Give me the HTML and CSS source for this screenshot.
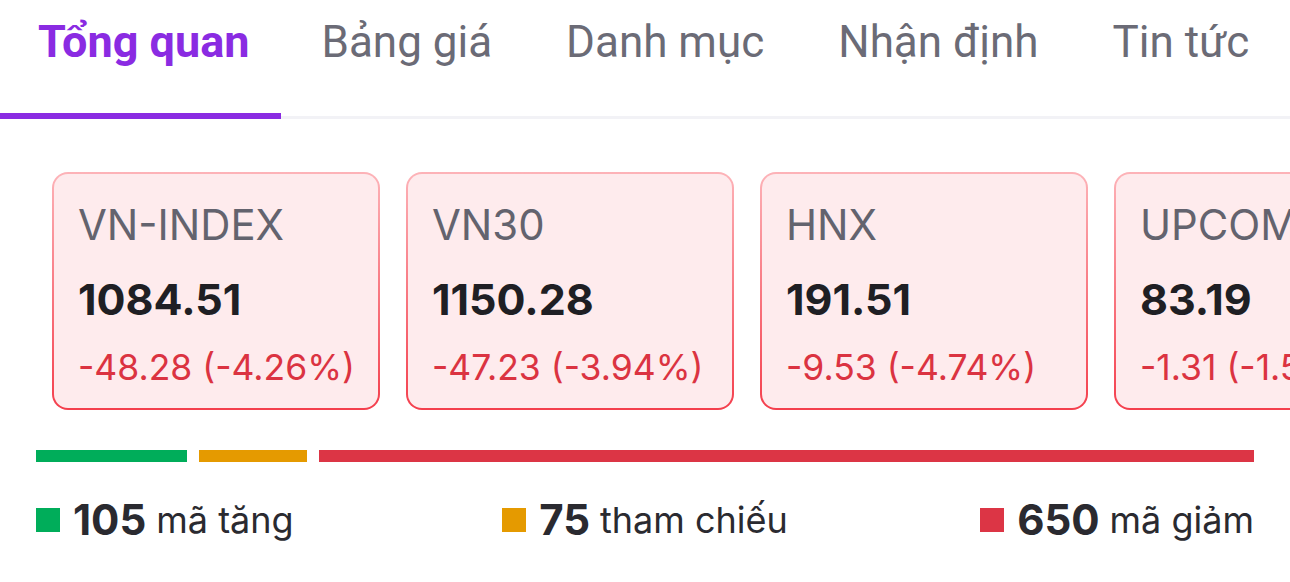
FILE: index.html
```html
<!DOCTYPE html>
<html lang="vi">
<head>
    <meta charset="UTF-8">
    <meta name="viewport" content="width=device-width, initial-scale=1.0">
    <title>Tổng quan thị trường</title>
    <link rel="stylesheet" href="styles.css">
</head>
<body class="body">

    <nav class="tabs">
        <a class="tab active" href="#">Tổng quan</a>
        <a class="tab" href="#">Bảng giá</a>
        <a class="tab" href="#">Danh mục</a>
        <a class="tab" href="#">Nhận định</a>
        <a class="tab" href="#">Tin tức</a>
    </nav>

    <div class="cards">
        <div class="card">
            <div class="card-name">VN-INDEX</div>
            <div class="card-value">1084.51</div>
            <div class="card-change">-48.28 (-4.26%)</div>
        </div>
        <div class="card">
            <div class="card-name">VN30</div>
            <div class="card-value">1150.28</div>
            <div class="card-change">-47.23 (-3.94%)</div>
        </div>
        <div class="card">
            <div class="card-name">HNX</div>
            <div class="card-value">191.51</div>
            <div class="card-change">-9.53 (-4.74%)</div>
        </div>
        <div class="card">
            <div class="card-name">UPCOM</div>
            <div class="card-value">83.19</div>
            <div class="card-change">-1.31 (-1.55%)</div>
        </div>
    </div>

    <div class="breadth">
        <div class="bars">
            <div class="bar up" style="flex-grow: 105"></div>
            <div class="bar ref" style="flex-grow: 75"></div>
            <div class="bar down" style="flex-grow: 650"></div>
        </div>
        <div class="legend">
            <div class="item"><span class="dot up"></span><b>105</b> mã tăng</div>
            <div class="item mid"><span class="dot ref"></span><b>75</b> tham chiếu</div>
            <div class="item last"><span class="dot down"></span><b>650</b> mã giảm</div>
        </div>
    </div>

</body>
</html>
```

FILE: styles.css
```css
.body{
    margin: 0;
    background-color: #ffffff;
    font-family: Inter, "Noto Sans", sans-serif;
    overflow: hidden;
}

/* tabs */
.tabs{
    display: flex;
    border-bottom: 3px solid #f2f2f6;
}
.tab{
    font-family: Roboto, "Liberation Sans", sans-serif;
    font-size: 44px;
    line-height: 54px;
    color: #6b6b76;
    text-decoration: none;
    padding: 15px 33px 44px 41px;
    border-bottom: 6px solid transparent;
    margin-bottom: -3px;
    white-space: nowrap;
}
.tab.active{
    font-size: 45px;
    color: #8a2be2;
    font-weight: 700;
    padding-left: 38px;
    padding-right: 31px;
    border-bottom-color: #8a2be2;
}

/* index cards */
.cards{
    display: flex;
    gap: 26px;
    padding: 53px 0 0 52px;
    overflow: hidden;
}
.card{
    flex-shrink: 0;
    box-sizing: border-box;
    width: 328px;
    height: 238px;
    padding: 26px 24px 0 24px;
    border: 2px solid transparent;
    border-radius: 16px;
    background: linear-gradient(#feebed, #feebed) padding-box,
                linear-gradient(#fdb3b8, #f43f4d) border-box;
    white-space: nowrap;
}
.card-name{
    font-size: 41.8px;
    line-height: 50px;
    color: #63636e;
}
.card-value{
    margin-top: 24px;
    font-size: 43px;
    line-height: 50px;
    font-weight: 700;
    color: #1f1f24;
}
.card-change{
    margin-top: 22px;
    font-size: 35.5px;
    line-height: 44px;
    color: #db3341;
}

/* market breadth */
.breadth{
    padding: 40px 36px 0 36px;
}
.bars{
    display: flex;
    gap: 12px;
}
.bar{
    height: 12px;
    flex-basis: 0;
}
.legend{
    display: grid;
    grid-template-columns: 1fr 1fr 1fr;
    margin-top: 35px;
}
.item{
    display: flex;
    align-items: center;
    font-size: 36px;
    line-height: 46px;
    color: #2a2a30;
    white-space: nowrap;
}
.item.mid{
    justify-self: center;
}
.item.last{
    justify-self: end;
}
.item b{
    font-size: 42px;
    font-weight: 700;
    margin-right: 10px;
}
.dot{
    width: 24px;
    height: 24px;
    margin-right: 13px;
}
.up{
    background-color: #00ad5a;
}
.ref{
    background-color: #e59a00;
}
.down{
    background-color: #dc3545;
}
```
